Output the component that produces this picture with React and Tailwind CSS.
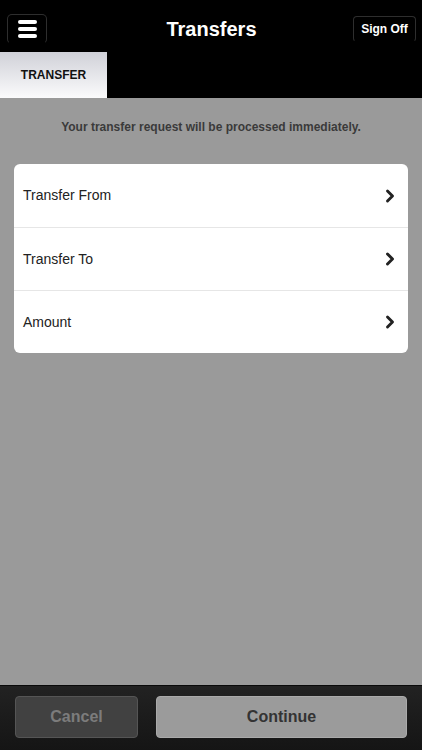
import { ChevronRight } from 'lucide-react';

const rows = ['Transfer From', 'Transfer To', 'Amount'];

function MenuButton() {
  return (
    <button className="flex h-[30px] w-[40px] flex-col items-center justify-center gap-[3px] rounded-[5px] border border-[#2e2e2e] border-b-transparent bg-black">
      <span className="h-[4px] w-[19px] rounded-full bg-white" />
      <span className="h-[4px] w-[19px] rounded-full bg-white" />
      <span className="h-[4px] w-[19px] rounded-full bg-white" />
    </button>
  );
}

export default function App() {
  return (
    <div
      className="flex h-[750px] w-[422px] flex-col bg-[#9a9a9a]"
      style={{ fontFamily: '"Liberation Sans", Arial, sans-serif' }}
    >
      {/* header */}
      <div className="bg-black">
        <div className="grid h-[52px] grid-cols-[1fr_auto_1fr] items-center pl-[7px] pr-[6px] pt-[5px]">
          <div>
            <MenuButton />
          </div>
          <h1 className="text-[20px] font-bold text-white">Transfers</h1>
          <div className="flex justify-end">
            <button className="h-[26px] w-[63px] rounded-[4px] border border-[#2e2e2e] border-b-transparent text-[12px] font-bold text-white">
              Sign Off
            </button>
          </div>
        </div>
        <div className="flex">
          <div className="flex h-[46px] w-[107px] items-center justify-center bg-gradient-to-b from-[#d0d1d8] to-[#fbfbfc] text-[12px] font-bold text-[#111]">
            TRANSFER
          </div>
        </div>
      </div>

      {/* content */}
      <div className="flex flex-1 flex-col px-[14px]">
        <p className="pt-[20px] text-center text-[12px] font-bold text-[#3a3a3a]">
          Your transfer request will be processed immediately.
        </p>
        <div className="mt-[28px] overflow-hidden rounded-[6px] bg-white">
          {rows.map((label, i) => (
            <div
              key={label}
              className={`flex h-[63px] items-center justify-between pl-[9px] pr-[8px] ${i > 0 ? 'border-t border-[#e6e6e6]' : ''}`}
            >
              <span className="text-[14px] text-[#222]">{label}</span>
              <ChevronRight size={20} strokeWidth={3.5} className="text-[#222]" />
            </div>
          ))}
        </div>
      </div>

      {/* footer */}
      <div className="flex h-[65px] gap-[18px] border-t border-[#0a0a0a] bg-gradient-to-b from-[#222] to-[#151515] px-[15px] pt-[10px]">
        <button className="h-[42px] w-[123px] rounded-[4px] border border-[#555] bg-[#414141] text-[16px] font-bold text-[#7c7c7c]">
          Cancel
        </button>
        <button className="h-[42px] flex-1 rounded-[4px] border border-[#aaa] bg-[#9b9b9b] text-[16px] font-bold text-[#333]">
          Continue
        </button>
      </div>
    </div>
  );
}
